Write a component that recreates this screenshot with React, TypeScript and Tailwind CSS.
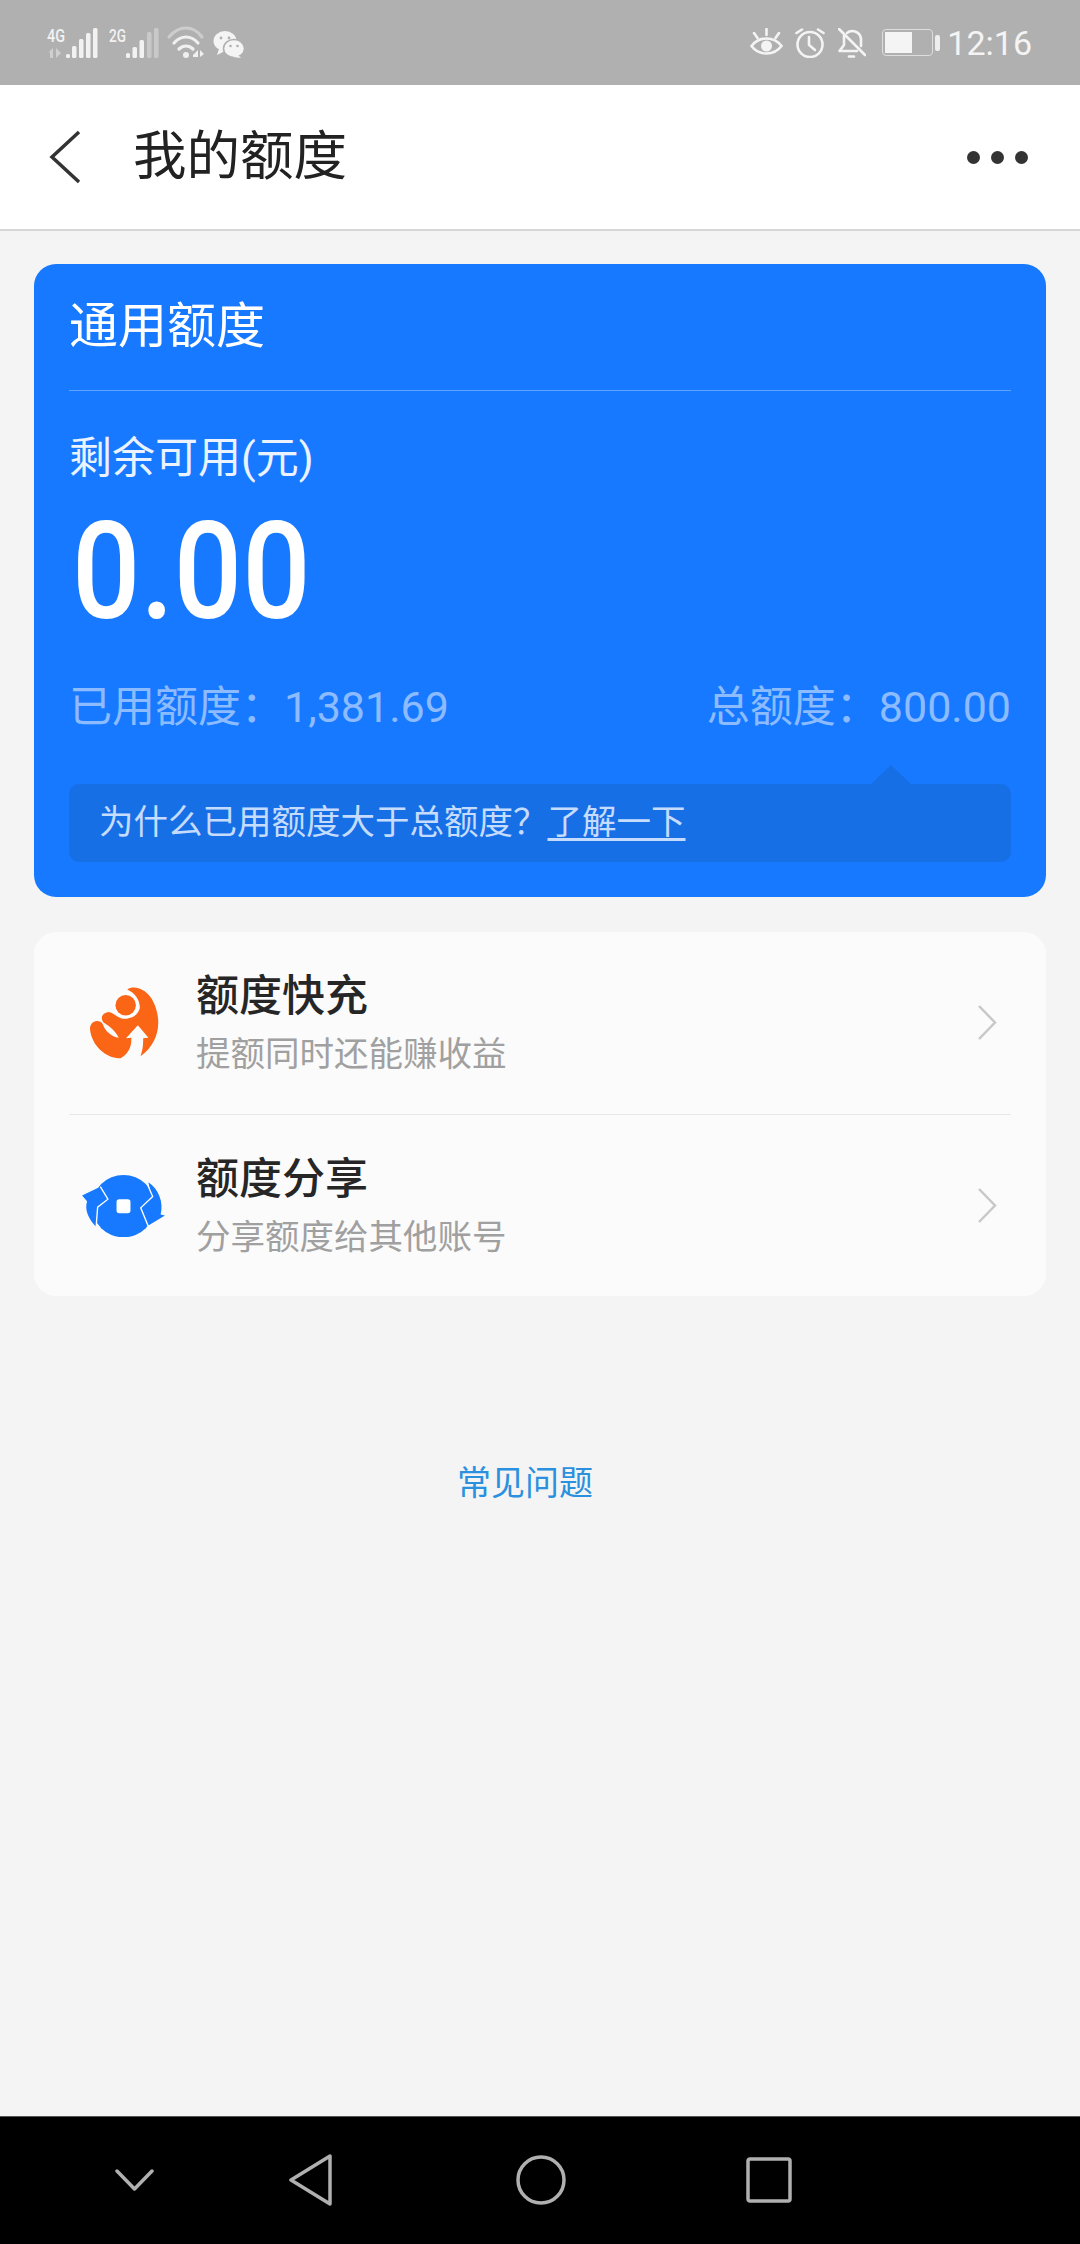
const CJK = "font-['Roboto','Noto_Sans_CJK_SC',sans-serif]";

function StatusLeft() {
  return (
    <svg width="200" height="50" viewBox="0 0 200 50" className="block">
      <g fill="#f2f2f2">
        <text x="0" y="24" fontFamily="Roboto" fontSize="19" fontWeight="500" fill="#f2f2f2" textLength="18" lengthAdjust="spacingAndGlyphs">4G</text>
        <text x="62" y="24" fontFamily="Roboto" fontSize="19" fontWeight="500" fill="#f2f2f2" textLength="17" lengthAdjust="spacingAndGlyphs">2G</text>
        <path d="M2 34 L6 30 L6 40 L3 40 L3 35 Z M9 30 L9 40 L14 35 Z" fill="#cfcfcf" />
        <rect x="19" y="36" width="4" height="4" rx="1.5" />
        <rect x="25" y="28" width="4.5" height="12" rx="1.5" />
        <rect x="32" y="21" width="4.5" height="19" rx="1.5" />
        <rect x="39" y="15" width="4.5" height="25" rx="1.5" />
        <rect x="46" y="10" width="4.5" height="30" rx="1.5" />
        <rect x="79" y="35" width="4" height="5" rx="1.5" />
        <rect x="85.5" y="29" width="4.5" height="11" rx="1.5" />
        <rect x="92.5" y="22" width="4.5" height="18" rx="1.5" />
        <rect x="100" y="14" width="4.5" height="26" rx="1.5" fill="#c9c9c9" />
        <rect x="107" y="10" width="4.5" height="30" rx="1.5" fill="#c9c9c9" />
      </g>
      <g fill="none" stroke="#f0f0f0" strokeWidth="3.2" strokeLinecap="round">
        <path d="M122 19 C132 7 146 7 155 19" stroke="#cdcdcd" />
        <path d="M127 25 C134 17 144 17 151 25" />
        <path d="M132 31 C136 27 142 27 146 31" />
      </g>
      <circle cx="139" cy="37" r="3" fill="#f0f0f0" />
      <path d="M146 37 L151 32 L151 39 L146 39 Z M153 32 L153 39 L157 36 Z" fill="#f0f0f0" />
      <g fill="#f4f4f4">
        <ellipse cx="178" cy="23" rx="11.5" ry="10" />
        <path d="M172 31 L170 37 L178 33 Z" />
        <ellipse cx="187" cy="30.5" rx="10.5" ry="9" stroke="#b0b0b0" strokeWidth="1.5" />
        <path d="M191 37 L194 40 L186 39 Z" />
        <circle cx="174" cy="20" r="1.4" fill="#b0b0b0" />
        <circle cx="182" cy="20" r="1.4" fill="#b0b0b0" />
        <circle cx="183.5" cy="28" r="1.3" fill="#b0b0b0" />
        <circle cx="190.5" cy="28" r="1.3" fill="#b0b0b0" />
      </g>
    </svg>
  );
}

function EyeIcon() {
  return (
    <svg width="33" height="30" viewBox="0 0 33 30" fill="none" stroke="#f4f4f4" strokeWidth="2.6" strokeLinecap="round">
      <path d="M1.5 18 C9 8 24 8 31.5 18 C24 28 9 28 1.5 18 Z" />
      <circle cx="16.5" cy="18" r="5.5" fill="#f4f4f4" stroke="none" />
      <path d="M16.5 1 L16.5 7 M4 5 L7.5 10 M29 5 L25.5 10" />
    </svg>
  );
}

function AlarmIcon() {
  return (
    <svg width="30" height="30" viewBox="0 0 30 30" fill="none" stroke="#f4f4f4" strokeWidth="2.6" strokeLinecap="round">
      <circle cx="15" cy="16.5" r="12.5" />
      <path d="M14 9 L14 17 L20 22" />
      <path d="M1.5 5 L7 1.5 M28.5 5 L23 1.5" />
    </svg>
  );
}

function BellOffIcon() {
  return (
    <svg width="28" height="30" viewBox="0 0 28 30" fill="none" stroke="#f4f4f4" strokeWidth="2.6" strokeLinecap="round" strokeLinejoin="round">
      <path d="M6 8 L6 17 L1.5 23 L19 23" />
      <path d="M9 5 C13 1.5 22 2.5 23 11 L23 18" />
      <path d="M1 1 L27 27" />
      <path d="M11 28.5 L16 28.5" />
    </svg>
  );
}

function BatteryIcon() {
  return (
    <div className="flex items-center gap-[2px]">
      <div className="h-[27px] w-[51px] rounded-[4px] border border-[#dddddd] p-[2px]">
        <div className="h-full w-[27px] bg-[#f4f4f4]" />
      </div>
      <div className="h-[16px] w-[5px] rounded-[2px] bg-[#eeeeee]" />
    </div>
  );
}

function QuickIcon() {
  return (
    <svg width="70" height="73" viewBox="145 140 212 220">
      <path
        d="M258 150 C280 135 320 150 338 190 C362 240 358 310 298 352 C306 330 306 315 306 298 L322 296 L290 258 L254 298 L270 296 C272 320 262 345 238 358 C200 362 150 325 145 270 C145 245 172 238 184 255 C190 275 210 293 232 296 C222 275 205 262 186 250 C176 238 180 222 200 218 C212 218 222 230 240 238 C262 242 290 232 296 205 C296 180 280 160 258 150 Z"
        fill="#fa6516"
      />
      <circle cx="253" cy="198" r="38" fill="#ffffff" />
      <circle cx="253" cy="198" r="31" fill="#fa6516" />
    </svg>
  );
}

function ShareIcon() {
  return (
    <svg width="83" height="63" viewBox="125 700 250 190" className="-ml-[2px]">
      <ellipse cx="250" cy="797" rx="95" ry="94" fill="#1779ff" />
      <path d="M125 765 L172 742 L198 776 L172 796 L168 860 C145 835 132 810 140 782 Z" fill="#1779ff" />
      <path d="M325 725 C355 745 372 785 362 822 L375 825 L325 855 L300 802 L335 770 Z" fill="#1779ff" />
      <path d="M180 738 L203 776 L172 800 L167 866" fill="none" stroke="#ffffff" strokeWidth="4" />
      <path d="M318 722 L338 768 L302 802 L325 858" fill="none" stroke="#ffffff" strokeWidth="4" />
      <rect x="229" y="776" width="42" height="42" rx="8" fill="#ffffff" />
    </svg>
  );
}

function Row({ icon, title, sub }: { icon: React.ReactNode; title: string; sub: string }) {
  return (
    <div className="flex h-[181px] items-center">
      <div className="flex w-[127px] shrink-0 justify-center pl-[6px] pr-[22px]">{icon}</div>
      <div className="flex-1">
        <div className="text-[43px] leading-[52px] font-medium text-[#262626]">{title}</div>
        <div className="mt-[10px] text-[34.5px] leading-[44px] text-[#a0a0a0]">{sub}</div>
      </div>
      <svg width="21" height="37" viewBox="0 0 21 37" fill="none" stroke="#c8c8c8" strokeWidth="2.5" className="mr-[13px]">
        <path d="M2 2 L18 18.5 L2 35" />
      </svg>
    </div>
  );
}

export default function App() {
  return (
    <div className={`flex h-[2244px] w-[1080px] flex-col overflow-hidden bg-[#f4f4f4] ${CJK}`}>
      {/* status bar */}
      <div className="flex h-[85px] shrink-0 items-center justify-between bg-[#b0b0b0] pl-[47px] pr-[48px]">
        <StatusLeft />
        <div className="flex items-center">
          <EyeIcon />
          <div className="ml-[12px]">
            <AlarmIcon />
          </div>
          <div className="ml-[13px]">
            <BellOffIcon />
          </div>
          <div className="ml-[16px]">
            <BatteryIcon />
          </div>
          <span className="ml-[7px] text-[34px] leading-none text-[#f4f4f4]">12:16</span>
        </div>
      </div>

      {/* header */}
      <div className="flex h-[146px] shrink-0 items-center border-b-2 border-[#d6d6d6] bg-white pl-[49px] pr-[52px]">
        <svg width="32" height="54" viewBox="0 0 32 54" fill="none" stroke="#333333" strokeWidth="3.5">
          <path d="M30 2 L3 27 L30 52" />
        </svg>
        <span className="ml-[52px] flex-1 text-[53.5px] leading-none text-[#222222]">我的额度</span>
        <div className="flex gap-[11px]">
          <div className="size-[13px] rounded-full bg-[#333333]" />
          <div className="size-[13px] rounded-full bg-[#333333]" />
          <div className="size-[13px] rounded-full bg-[#333333]" />
        </div>
      </div>

      <div className="flex flex-1 flex-col px-[34px] pt-[33px]">
        {/* quota card */}
        <div className="h-[633px] rounded-[22px] bg-[#1779ff] px-[35px]">
          <div className="flex h-[127px] items-center border-b border-[#5fa3fe] pb-[2px] text-[49px] leading-none text-white">
            通用额度
          </div>
          <div className="mt-[40px] text-[43px] leading-[54px] text-[#eaf3ff]">剩余可用(元)</div>
          <div className="mt-[22px] ml-[3px] origin-left scale-x-[0.885] text-[136px] leading-[130px] font-medium text-white">0.00</div>
          <div className="mt-[43px] flex justify-between text-[43px] leading-[54px] text-[#8cbcff]">
            <span>已用额度：1,381.69</span>
            <span>总额度：800.00</span>
          </div>
          <div className="relative mt-[50px] flex h-[78px] items-center rounded-[10px] bg-[#176fe6] px-[30px] text-[34.5px] text-[#c5dcff]">
            <div className="absolute -top-[19px] right-[100px] h-0 w-0 border-x-[20px] border-b-[19px] border-x-transparent border-b-[#176fe6]" />
            <span>为什么已用额度大于总额度？</span>
            <span className="underline underline-offset-4">了解一下</span>
          </div>
        </div>

        {/* actions */}
        <div className="mt-[35px] rounded-[22px] bg-[#fbfbfb] px-[35px]">
          <div className="border-b border-[#e8e8e8] pb-[1px]">
            <Row icon={<QuickIcon />} title="额度快充" sub="提额同时还能赚收益" />
          </div>
          <Row icon={<ShareIcon />} title="额度分享" sub="分享额度给其他账号" />
        </div>

        <div className="mt-[164px] pr-[30px] text-center text-[34px] leading-[46px] text-[#2b90de]">常见问题</div>
      </div>

      {/* nav bar */}
      <div className="flex h-[128px] shrink-0 items-center border-t border-[#555555] bg-black pb-[2px] pl-[115px]">
        <svg width="39" height="22" viewBox="0 0 39 22" fill="none" stroke="#b0b0b0" strokeWidth="3.5" strokeLinecap="round" strokeLinejoin="round">
          <path d="M2 2 L19.5 20 L37 2" />
        </svg>
        <svg width="44" height="52" viewBox="0 0 44 52" fill="none" stroke="#b0b0b0" strokeWidth="3.5" strokeLinejoin="round" className="ml-[135px]">
          <path d="M41 2 L41 50 L2 26 Z" />
        </svg>
        <svg width="50" height="50" viewBox="0 0 50 50" fill="none" stroke="#b0b0b0" strokeWidth="3.5" className="ml-[183px]">
          <circle cx="25" cy="25" r="23" />
        </svg>
        <svg width="46" height="46" viewBox="0 0 46 46" fill="none" stroke="#b0b0b0" strokeWidth="3.5" strokeLinejoin="round" className="ml-[180px]">
          <rect x="2" y="2" width="42" height="42" rx="2" />
        </svg>
      </div>
    </div>
  );
}
